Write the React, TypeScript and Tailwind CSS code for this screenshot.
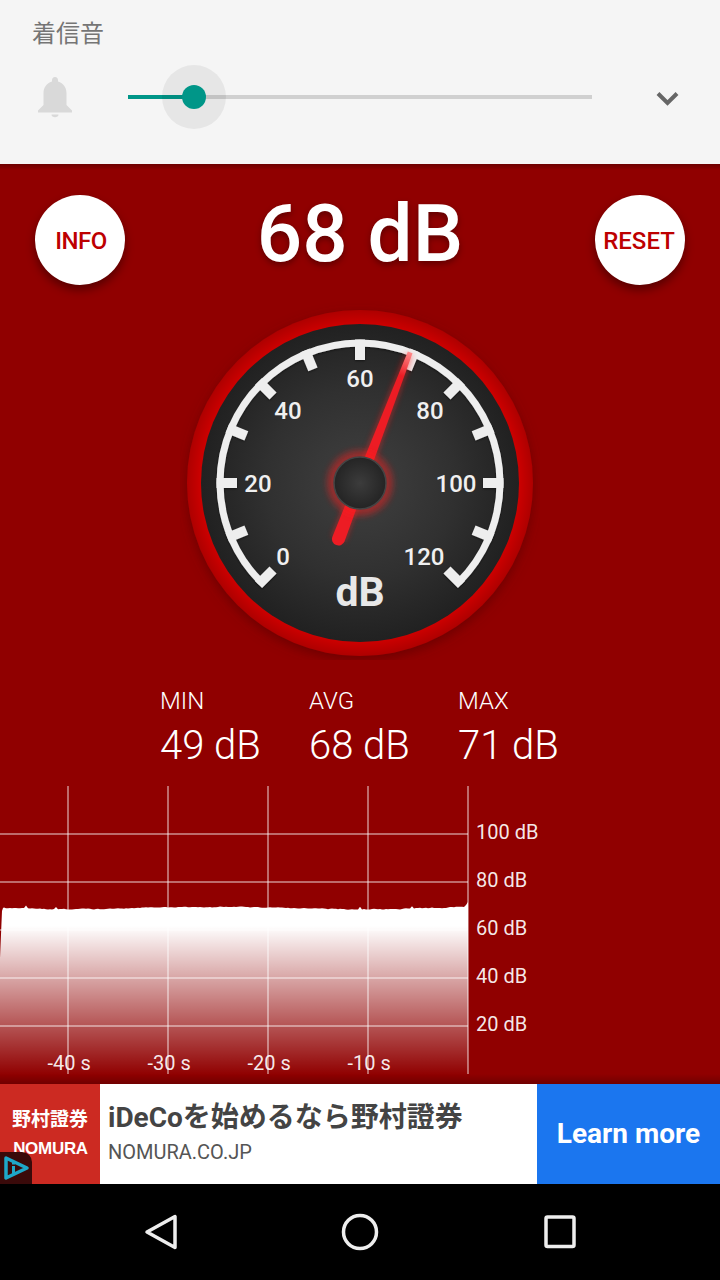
const SANS = "font-['Roboto','Noto_Sans_CJK_JP',sans-serif]";

function wave(): string {
  let seed = 29;
  const rnd = () => {
    seed = (seed * 16807) % 2147483647;
    return seed / 2147483647;
  };
  let d = "M0 298 L0 172 L2 125 L3 122";
  let y = 122;
  for (let x = 4; x < 466; x += 2) {
    const target = 122 + Math.sin(x / 45) * 1.2;
    y = y * 0.6 + (target + (rnd() - 0.5) * 2) * 0.4;
    let out = y;
    if (rnd() > 0.97) out -= 2.5;
    d += ` L${x} ${out.toFixed(1)}`;
  }
  d += " L466 119 L468 116 L468 298 Z";
  return d;
}

function Bell() {
  return (
    <svg width="36" height="42" viewBox="0 0 36 42" className="shrink-0">
      <path d="M18 1c-2 0-3 1.600-3 3.400v1.200C9.500 7.200 6.500 11.800 6.500 17.500V29L1 34.500V36.500H35V34.500L29.500 29V17.500C29.500 11.800 26.500 7.200 21 5.600V4.400C21 2.600 20 1 18 1Z" fill="#d9d9d9" />
      <path d="M14.500 38.500h7c0 1.800-1.500 2.800-3.500 2.800s-3.500-1-3.500-2.800Z" fill="#d9d9d9" />
    </svg>
  );
}

function Gauge() {
  const cx = 180;
  const cy = 183;
  const ticks = Array.from({ length: 13 }, (_, i) => -135 + i * 22.5);
  const labels: [string, number, number][] = [
    ["0", 103, 265],
    ["20", 78, 192],
    ["40", 108, 119],
    ["60", 180, 87],
    ["80", 250, 119],
    ["100", 276, 192],
    ["120", 244, 265],
  ];
  const pt = (deg: number, r: number) => {
    const a = ((deg - 90) * Math.PI) / 180;
    return [cx + r * Math.cos(a), cy + r * Math.sin(a)];
  };
  const [sx, sy] = pt(-135, 140);
  const [ex, ey] = pt(135, 140);
  return (
    <svg width="360" height="360" viewBox="0 0 360 360" className="block">
      <defs>
        <radialGradient id="dial" cx="50%" cy="50%" r="50%">
          <stop offset="0%" stopColor="#404040" />
          <stop offset="60%" stopColor="#303030" />
          <stop offset="100%" stopColor="#212121" />
        </radialGradient>
        <radialGradient id="hub" cx="50%" cy="50%" r="50%">
          <stop offset="0%" stopColor="#3c3c3c" />
          <stop offset="100%" stopColor="#242424" />
        </radialGradient>
        <radialGradient id="ring" cx="50%" cy="50%" r="50%">
          <stop offset="92%" stopColor="#cc0000" />
          <stop offset="94%" stopColor="#c40000" />
          <stop offset="100%" stopColor="#ae0000" />
        </radialGradient>
        <linearGradient id="tip" gradientUnits="userSpaceOnUse" x1="0" y1={cy - 140} x2="0" y2={cy - 115}>
          <stop offset="0%" stopColor="#ff8a8a" />
          <stop offset="100%" stopColor="#ed1c24" />
        </linearGradient>
        <filter id="ringShadow" x="-20%" y="-20%" width="140%" height="140%">
          <feDropShadow dx="0" dy="4" stdDeviation="6" floodColor="#500000" floodOpacity="0.55" />
        </filter>
        <filter id="glow" x="-60%" y="-60%" width="220%" height="220%">
          <feGaussianBlur stdDeviation="3" />
        </filter>
        <filter id="tickShadow" x="-10%" y="-10%" width="120%" height="120%">
          <feDropShadow dx="0" dy="1" stdDeviation="1" floodColor="#000" floodOpacity="0.5" />
        </filter>
      </defs>
      <circle cx={cx} cy={cy} r="173" fill="url(#ring)" filter="url(#ringShadow)" />
      <circle cx={cx} cy={cy} r="159" fill="url(#dial)" />
      <g filter="url(#tickShadow)">
        <path d={`M${sx} ${sy} A140 140 0 1 1 ${ex} ${ey}`} fill="none" stroke="#eeeeee" strokeWidth="7" />
        {ticks.map((t) => {
          const [x1, y1] = pt(t, 143.5);
          const [x2, y2] = pt(t, 123);
          return <line key={t} x1={x1} y1={y1} x2={x2} y2={y2} stroke="#eeeeee" strokeWidth="10" />;
        })}
      </g>
      <g fontFamily="Roboto, sans-serif" fill="#f0f0f0" textAnchor="middle">
        {labels.map(([s, x, y]) => (
          <text key={s} x={x} y={y} fontSize="24" fontWeight="500">
            {s}
          </text>
        ))}
        <text x={cx} y="306" fontSize="41" fontWeight="700" fill="#e8e8e8">
          dB
        </text>
      </g>
      <g transform={`rotate(21 ${cx} ${cy})`}>
        <path d={`M${cx - 3} ${cy - 137} L${cx + 3} ${cy - 137} L${cx + 6.500} ${cy + 60} L${cx - 6.500} ${cy + 60} Z`} fill="#ff1a1a" opacity="0.6" filter="url(#glow)" />
        <path d={`M${cx - 2.500} ${cy - 140} L${cx + 2.500} ${cy - 140} L${cx + 6.500} ${cy + 60} A6.500 6.500 0 0 1 ${cx - 6.500} ${cy + 60} Z`} fill="url(#tip)" />
      </g>
      <circle cx={cx} cy={cy} r="33" fill="#ff1a1a" opacity="0.45" filter="url(#glow)" />
      <circle cx={cx} cy={cy} r="26" fill="url(#hub)" stroke="#444444" strokeWidth="1.500" />
    </svg>
  );
}

function Chart() {
  const xs = [68, 168, 268, 368, 468];
  const ys = [48, 96, 144, 192, 240];
  const yLabels: [string, number][] = [
    ["100 dB", 53],
    ["80 dB", 101],
    ["60 dB", 149],
    ["40 dB", 197],
    ["20 dB", 245],
  ];
  const xLabels: [string, number][] = [
    ["-40 s", 47.5],
    ["-30 s", 147.5],
    ["-20 s", 247.5],
    ["-10 s", 347.5],
  ];
  return (
    <svg width="720" height="298" viewBox="0 0 720 298" className="block">
      <defs>
        <linearGradient id="fill" gradientUnits="userSpaceOnUse" x1="0" y1="0" x2="0" y2="298">
          <stop offset="47%" stopColor="#ffffff" />
          <stop offset="97%" stopColor="#ffffff" stopOpacity="0" />
        </linearGradient>
        <linearGradient id="bot" x1="0" y1="0" x2="0" y2="1">
          <stop offset="0%" stopColor="#000000" stopOpacity="0" />
          <stop offset="100%" stopColor="#000000" stopOpacity="0.22" />
        </linearGradient>
      </defs>
      <path d={wave()} fill="url(#fill)" />
      {ys.map((y) => (
        <line key={y} x1="0" x2="468" y1={y} y2={y} stroke="#ffffff" strokeOpacity="0.42" strokeWidth="2" />
      ))}
      {xs.map((x) => (
        <line key={x} x1={x} x2={x} y1="0" y2="288" stroke="#ffffff" strokeOpacity="0.42" strokeWidth="2" />
      ))}
      <g fontFamily="Roboto, sans-serif" fontSize="20" fill="#ffffff" fillOpacity="0.92">
        {yLabels.map(([s, y]) => (
          <text key={s} x="476" y={y}>
            {s}
          </text>
        ))}
        {xLabels.map(([s, x]) => (
          <text key={s} x={x} y="284">
            {s}
          </text>
        ))}
      </g>
      <rect x="0" y="288" width="720" height="10" fill="url(#bot)" />
    </svg>
  );
}

function Stat({ label, value }: { label: string; value: string }) {
  return (
    <div className="flex w-[149px] flex-col">
      <span className="text-[24px] leading-[28px] font-light">{label}</span>
      <span className="mt-[7px] text-[40px] leading-[47px] font-light">{value}</span>
    </div>
  );
}

export default function App() {
  return (
    <div className={`flex h-[1280px] w-[720px] flex-col overflow-hidden bg-black ${SANS}`}>
      <div className="flex h-[164px] shrink-0 flex-col bg-[#f5f5f5]">
        <div className="pt-[18px] pl-[32px] text-[24px] leading-[32px] text-[#757575]">着信音</div>
        <div className="mt-[15px] flex h-[64px] items-center">
          <div className="ml-[37px] flex w-[36px] justify-center">
            <Bell />
          </div>
          <div className="relative ml-[55px] h-[4px] w-[464px] bg-[#d0d0d0]">
            <div className="h-full w-[66px] bg-[#009688]" />
            <div className="absolute top-[-30px] left-[34px] h-[64px] w-[64px] rounded-full bg-black/[0.06]" />
            <div className="absolute top-[-10px] left-[54px] h-[24px] w-[24px] rounded-full bg-[#009688]" />
          </div>
          <svg width="26" height="18" viewBox="0 0 26 18" className="mt-[3px] ml-[63px]">
            <path d="M3 3.500 L12.500 13 L22 3.500" fill="none" stroke="#666666" strokeWidth="4" />
          </svg>
        </div>
      </div>

      <div className="relative flex h-[920px] shrink-0 flex-col bg-[#900000] text-white">
        <div className="absolute inset-x-0 top-0 h-[6px] bg-gradient-to-b from-black/25 to-transparent" />
        <div className="flex items-center justify-between px-[35px] pt-[31px]">
          <button className="flex h-[90px] w-[90px] items-center justify-center rounded-full bg-white pt-[2px] pl-[2px] text-[24px] font-medium tracking-[-0.5px] text-[#bd0000] shadow-[0_5px_10px_rgba(0,0,0,0.4)]">INFO</button>
          <div className="mt-[-12px] text-[80px] leading-[94px] font-medium [text-shadow:0_3px_6px_rgba(0,0,0,0.35)]">68 dB</div>
          <button className="flex h-[90px] w-[90px] items-center justify-center rounded-full bg-white pt-[2px] pr-[2px] text-[24px] font-medium whitespace-nowrap text-[#bd0000] shadow-[0_5px_10px_rgba(0,0,0,0.4)]">RESET</button>
        </div>
        <div className="mt-[15px] flex justify-center">
          <Gauge />
        </div>
        <div className="mt-[27px] flex pl-[160px]">
          <Stat label="MIN" value="49 dB" />
          <Stat label="AVG" value="68 dB" />
          <Stat label="MAX" value="71 dB" />
        </div>
        <div className="mt-auto">
          <Chart />
        </div>
      </div>

      <div className="flex h-[100px] shrink-0 bg-white">
        <div className="relative flex w-[100px] flex-col items-center bg-[#cc2a22] text-white">
          <span className="mt-[24px] text-[19px] leading-[24px] font-bold whitespace-nowrap">野村證券</span>
          <span className="mt-[7px] pl-[1px] font-['Liberation_Sans',sans-serif] text-[17px] leading-[20px] font-bold tracking-[-0.3px]">NOMURA</span>
          <div className="absolute bottom-0 left-0 flex h-[32px] w-[32px] items-center justify-center rounded-tr-[10px] bg-[#3a0a0a]">
            <svg width="28" height="26" viewBox="0 0 28 26">
              <path d="M4 3 L25 13 L4 23 Z" fill="none" stroke="#1ea7c9" strokeWidth="3.500" strokeLinejoin="round" />
              <rect x="10" y="11" width="3" height="8" fill="#1ea7c9" />
              <rect x="10" y="6.500" width="3" height="3" fill="#1ea7c9" />
            </svg>
          </div>
        </div>
        <div className="flex min-w-0 flex-1 flex-col pt-[14px] pl-[8px]">
          <span className="text-[28px] leading-[40px] font-bold whitespace-nowrap text-[#444444]">iDeCoを始めるなら野村證券</span>
          <span className="mt-[1px] text-[20px] leading-[26px] text-[#555555]">NOMURA.CO.JP</span>
        </div>
        <div className="flex w-[183px] items-center justify-center bg-[#1b76ef] text-[28px] font-bold text-white">Learn more</div>
      </div>

      <div className="flex h-[96px] shrink-0 items-center justify-center gap-[160px] bg-black">
        <svg width="40" height="40" viewBox="0 0 40 40">
          <path d="M35 4.500 V35.500 L7 20 Z" fill="none" stroke="#eeeeee" strokeWidth="3.500" strokeLinejoin="round" />
        </svg>
        <svg width="40" height="40" viewBox="0 0 40 40">
          <circle cx="20" cy="20" r="16.500" fill="none" stroke="#eeeeee" strokeWidth="3.500" />
        </svg>
        <svg width="40" height="40" viewBox="0 0 40 40">
          <rect x="6" y="5" width="28" height="29.500" rx="1.500" fill="none" stroke="#eeeeee" strokeWidth="3.500" />
        </svg>
      </div>
    </div>
  );
}
